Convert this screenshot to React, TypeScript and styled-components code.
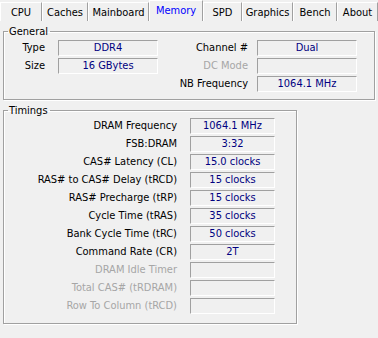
import { Fragment } from "react";
import styled, { createGlobalStyle } from "styled-components";

const Global = createGlobalStyle`
  html, body {
    margin: 0;
    padding: 0;
    background: #f0f0f0;
  }
  body {
    font-family: "DejaVu Sans Condensed", "Liberation Sans", sans-serif;
    font-size: 11px;
    color: #000;
  }
`;

const Window = styled.div`
  width: 378px;
  height: 338px;
  background: #f0f0f0;
  overflow: hidden;
`;

const TabBar = styled.div`
  display: flex;
  height: 21px;
  align-items: flex-end;
`;

const Tab = styled.div<{ $w: number; $active?: boolean }>`
  box-sizing: border-box;
  width: ${(p) => p.$w}px;
  height: ${(p) => (p.$active ? 21 : 19)}px;
  display: flex;
  align-items: center;
  justify-content: center;
  padding-bottom: ${(p) => (p.$active ? 2 : 0)}px;
  border-left: 1px solid #fff;
  border-top: 1px solid #fff;
  border-right: 1px solid #a0a0a0;
  color: ${(p) => (p.$active ? "#0000ff" : "#000")};
  background: #f0f0f0;
`;

const Page = styled.div`
  padding: 4px 3px 0 3px;
`;

const Group = styled.fieldset<{ $w: number }>`
  box-sizing: border-box;
  width: ${(p) => p.$w}px;
  margin: 0 0 4px 0;
  padding: 0;
  border: 1px solid #a0a0a0;
  border-radius: 0;
  box-shadow: inset 1px 1px 0 #fff, 1px 1px 0 #fff;
`;

const Legend = styled.legend`
  margin-left: 4px;
  padding: 0 2px 0 1px;
  line-height: 13px;
`;

const GeneralGrid = styled.div`
  display: grid;
  grid-template-columns: 54px 100px 99px 100px;
  row-gap: 2px;
  padding: 2px 0 7px 0;
`;

const TimingGrid = styled.div`
  display: grid;
  grid-template-columns: 186px 85px;
  row-gap: 2px;
  padding: 1px 0 9px 0;
`;

const Label = styled.div<{ $gap: number; $off?: boolean }>`
  text-align: right;
  padding-right: ${(p) => p.$gap}px;
  line-height: 16px;
  white-space: nowrap;
  color: ${(p) => (p.$off ? "#a6a6a6" : "#000")};
`;

const Field = styled.div`
  box-sizing: border-box;
  height: 16px;
  line-height: 14px;
  text-align: center;
  color: #000080;
  border-top: 1px solid #a0a0a0;
  border-left: 1px solid #a0a0a0;
  border-right: 1px solid #fff;
  border-bottom: 1px solid #fff;
  white-space: nowrap;
`;

const tabs: [string, number][] = [
  ["CPU", 42],
  ["Caches", 46],
  ["Mainboard", 61],
  ["Memory", 54],
  ["SPD", 39],
  ["Graphics", 51],
  ["Bench", 44],
  ["About", 41],
];

const timings: [string, string, boolean?][] = [
  ["DRAM Frequency", "1064.1 MHz"],
  ["FSB:DRAM", "3:32"],
  ["CAS# Latency (CL)", "15.0 clocks"],
  ["RAS# to CAS# Delay (tRCD)", "15 clocks"],
  ["RAS# Precharge (tRP)", "15 clocks"],
  ["Cycle Time (tRAS)", "35 clocks"],
  ["Bank Cycle Time (tRC)", "50 clocks"],
  ["Command Rate (CR)", "2T"],
  ["DRAM Idle Timer", "", true],
  ["Total CAS# (tRDRAM)", "", true],
  ["Row To Column (tRCD)", "", true],
];

export default function App() {
  return (
    <Window>
      <Global />
      <TabBar>
        {tabs.map(([name, w]) => (
          <Tab key={name} $w={w} $active={name === "Memory"}>
            {name}
          </Tab>
        ))}
      </TabBar>
      <Page>
        <Group $w={372}>
          <Legend>General</Legend>
          <GeneralGrid>
            <Label $gap={13}>Type</Label>
            <Field>DDR4</Field>
            <Label $gap={9}>Channel #</Label>
            <Field>Dual</Field>
            <Label $gap={13}>Size</Label>
            <Field>16 GBytes</Field>
            <Label $gap={9} $off>DC Mode</Label>
            <Field />
            <div />
            <div />
            <Label $gap={9}>NB Frequency</Label>
            <Field>1064.1 MHz</Field>
          </GeneralGrid>
        </Group>
        <Group $w={294}>
          <Legend>Timings</Legend>
          <TimingGrid>
            {timings.map(([label, value, off]) => (
              <Fragment key={label}>
                <Label $gap={13} $off={off}>
                  {label}
                </Label>
                <Field>{value}</Field>
              </Fragment>
            ))}
          </TimingGrid>
        </Group>
      </Page>
    </Window>
  );
}
